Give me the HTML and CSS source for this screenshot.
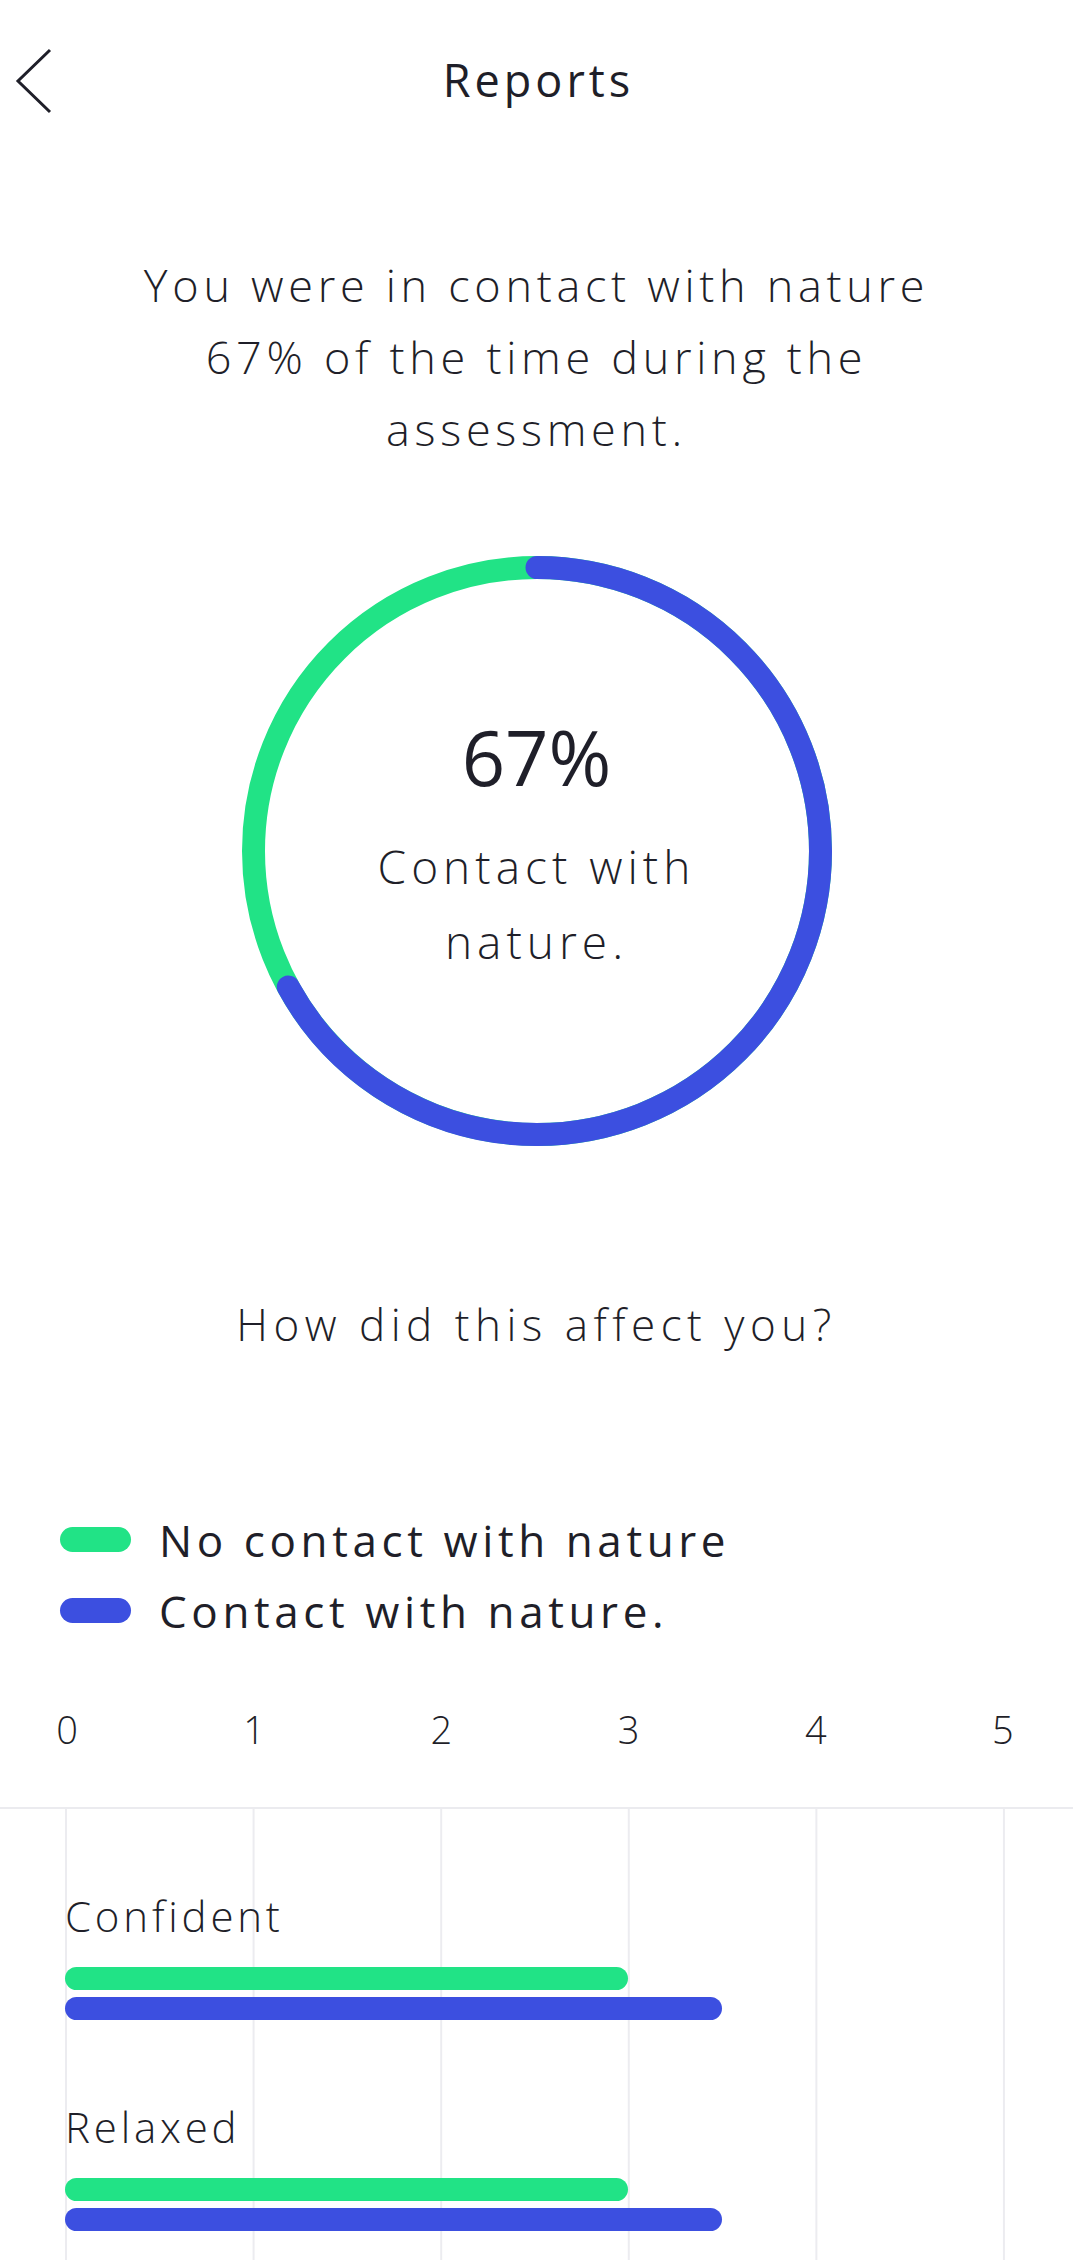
FILE: index.html
```html
<!DOCTYPE html>
<html lang="en">
<head>
<meta charset="utf-8">
<title>Reports</title>
<link rel="stylesheet" href="styles.css">
</head>
<body>
<div class="screen">
  <header class="topbar">
    <button class="back" aria-label="Back">
      <svg width="40" height="66" viewBox="0 0 40 66"><polyline points="35,2 3,33 35,64" fill="none" stroke="#1f1f29" stroke-width="3" stroke-linejoin="miter"/></svg>
    </button>
    <h1 class="title">Reports</h1>
    <span></span>
  </header>

  <p class="intro">You were in contact with nature<br>67% of the time during the<br>assessment.</p>

  <div class="donut">
    <svg class="ring" width="590" height="590" viewBox="0 0 590 590">
      <circle cx="295" cy="295" r="283.5" fill="none" stroke="#21e386" stroke-width="23"/>
      <circle cx="295" cy="295" r="283.5" fill="none" stroke="#3c4fe0" stroke-width="23" stroke-linecap="round" stroke-dasharray="1193.5 1781.3" transform="rotate(-90 295 295)"/>
    </svg>
    <div class="donut-label">
      <div class="pct">67%</div>
      <div class="pct-caption">Contact with<br>nature.</div>
    </div>
  </div>

  <p class="question">How did this affect you?</p>

  <ul class="legend">
    <li class="legend-item"><span class="swatch green"></span>No contact with nature</li>
    <li class="legend-item"><span class="swatch blue"></span>Contact with nature.</li>
  </ul>

  <div class="axis">
    <div class="ticks">
      <span class="tick">0</span>
      <span class="tick">1</span>
      <span class="tick">2</span>
      <span class="tick">3</span>
      <span class="tick">4</span>
      <span class="tick">5</span>
    </div>
  </div>

  <div class="plot">
    <div class="group">
      <div class="group-label">Confident</div>
      <div class="bars">
        <div class="bar green" style="width:60%"></div>
        <div class="bar blue" style="width:70%"></div>
      </div>
    </div>
    <div class="group">
      <div class="group-label">Relaxed</div>
      <div class="bars">
        <div class="bar green" style="width:60%"></div>
        <div class="bar blue" style="width:70%"></div>
      </div>
    </div>
  </div>
</div>
</body>
</html>
```

FILE: styles.css
```css
* { box-sizing: border-box; }

html, body {
  margin: 0;
  padding: 0;
  background: #ffffff;
}

body {
  font-family: "Open Sans", "Noto Sans", sans-serif;
  color: #1f1f29;
  width: 1073px;
  overflow: hidden;
}

.screen {
  width: 1073px;
  min-height: 2260px;
  display: flex;
  flex-direction: column;
}

.topbar {
  height: 160px;
  display: grid;
  grid-template-columns: 1fr auto 1fr;
  align-items: center;
}

.back {
  justify-self: start;
  margin-left: 15px;
  margin-top: 2px;
  padding: 0;
  border: 0;
  background: none;
  display: flex;
}

.title {
  margin: 0;
  font-size: 45px;
  font-weight: 500;
  line-height: 60px;
  letter-spacing: 4px;
  padding-left: 4px;
}

.intro {
  margin: 89px 0 0;
  text-align: center;
  font-size: 45px;
  font-weight: 300;
  line-height: 72px;
  letter-spacing: 4.7px;
}

.donut {
  margin: 91px auto 0;
  width: 590px;
  height: 590px;
  display: grid;
}

.ring,
.donut-label {
  grid-area: 1 / 1;
}

.donut-label {
  display: flex;
  flex-direction: column;
  align-items: center;
  justify-content: center;
  text-align: center;
  padding-bottom: 16px;
}

.pct {
  font-size: 76px;
  font-weight: 500;
  line-height: 100px;
}

.pct-caption {
  margin-top: 22px;
  font-size: 46px;
  font-weight: 300;
  line-height: 75px;
  letter-spacing: 5px;
}

.question {
  margin: 148px 0 0;
  text-align: center;
  font-size: 44px;
  font-weight: 300;
  line-height: 60px;
  letter-spacing: 5.5px;
}

.legend {
  list-style: none;
  margin: 150px 0 0;
  padding: 0 0 0 60px;
}

.legend-item {
  display: flex;
  align-items: center;
  gap: 28px;
  height: 71px;
  font-size: 44px;
  font-weight: 500;
  letter-spacing: 4.6px;
}

.swatch {
  width: 71px;
  height: 25px;
  border-radius: 13px;
  flex: none;
}

.green { background: #21e386; }
.blue { background: #3c4fe0; }

.axis {
  margin-top: 58px;
  padding: 0 68px 53px 66px;
  border-bottom: 2px solid #ebebef;
}

.ticks {
  width: 938px;
  display: flex;
  justify-content: space-between;
}

.tick {
  width: 2px;
  display: flex;
  justify-content: center;
  font-size: 38px;
  font-weight: 300;
  line-height: 50px;
}

.plot {
  flex: 1;
  padding: 80px 0 40px 65px;
  background-image: linear-gradient(to right, #ececf0 2px, transparent 2px);
  background-size: 187.6px 100%;
  background-position: 65px 0;
  background-repeat: repeat-x;
  display: flex;
  flex-direction: column;
  gap: 80px;
}

.group-label {
  font-size: 42px;
  font-weight: 300;
  line-height: 54px;
  letter-spacing: 3.8px;
}

.bars {
  width: 938px;
  margin-top: 24px;
  display: flex;
  flex-direction: column;
  gap: 7px;
}

.bar {
  height: 23px;
  border-radius: 12px;
}
```
